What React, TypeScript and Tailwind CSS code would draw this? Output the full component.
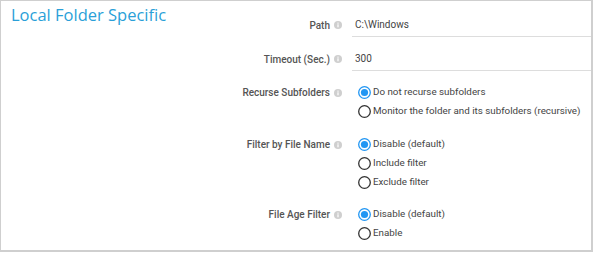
import React from 'react';

const InfoIcon = () => (
  <svg width="8" height="8" viewBox="0 0 8 8" className="ml-[4px] shrink-0">
    <circle cx="4" cy="4" r="4" fill="#cfcfcf" />
    <rect x="3.4" y="3.3" width="1.2" height="3" fill="#fff" />
    <rect x="3.4" y="1.6" width="1.2" height="1.1" fill="#fff" />
  </svg>
);

const Radio = ({ checked, label }: { checked?: boolean; label: string }) => (
  <div className="flex h-[19px] items-center whitespace-nowrap">
    <svg width="13" height="13" viewBox="0 0 13 13" className="shrink-0">
      {checked ? (
        <>
          <circle cx="6.5" cy="6.5" r="5.8" fill="none" stroke="#2196f3" strokeWidth="1.3" />
          <circle cx="6.5" cy="6.5" r="3.6" fill="#2196f3" />
        </>
      ) : (
        <circle cx="6.5" cy="6.5" r="5.8" fill="none" stroke="#333" strokeWidth="1.3" />
      )}
    </svg>
    <span className="ml-[2px] text-[9.8px] text-[#444]">{label}</span>
  </div>
);

const Label = ({ text }: { text: string }) => (
  <div className="flex h-[19px] w-[351px] shrink-0 items-center justify-end pr-[10px] whitespace-nowrap">
    <span className="text-[10px] font-medium text-[#555]">{text}</span>
    <InfoIcon />
  </div>
);

const TextRow = ({ label, value, className }: { label: string; value: string; className?: string }) => (
  <div className={`flex h-[24px] items-center ${className ?? ''}`}>
    <Label text={label} />
    <div className="flex h-[24px] flex-1 items-center border-b border-[#ddd] pl-[3px] text-[10px] text-[#444]">
      {value}
    </div>
  </div>
);

const RadioRow = ({
  label,
  options,
  selected,
  className,
}: {
  label: string;
  options: string[];
  selected: number;
  className?: string;
}) => (
  <div className={`flex items-start ${className ?? ''}`}>
    <Label text={label} />
    <div className="flex flex-col pl-[6px]">
      {options.map((o, i) => (
        <Radio key={o} label={o} checked={i === selected} />
      ))}
    </div>
  </div>
);

export default function App() {
  return (
    <div className="h-[253px] w-[593px] bg-white" style={{ fontFamily: 'Roboto, "Liberation Sans", sans-serif' }}>
      <div className="h-[252px] w-[593px] border-t border-l border-r-2 border-b-2 border-[#cfcfcf]">
        <div
          className="h-[12px] whitespace-nowrap pl-[10px] pt-[4px] text-[16.5px] leading-[20px] text-[#2a9fd8]"
          style={{ fontFamily: '"Open Sans", "Noto Sans", sans-serif' }}
        >
          Local Folder Specific
        </div>
        <TextRow label="Path" value="C:\Windows" />
        <TextRow label="Timeout (Sec.)" value="300" className="mt-[10px]" />
        <RadioRow
          label="Recurse Subfolders"
          options={['Do not recurse subfolders', 'Monitor the folder and its subfolders (recursive)']}
          selected={0}
          className="mt-[12px]"
        />
        <RadioRow
          label="Filter by File Name"
          options={['Disable (default)', 'Include filter', 'Exclude filter']}
          selected={0}
          className="mt-[14px]"
        />
        <RadioRow
          label="File Age Filter"
          options={['Disable (default)', 'Enable']}
          selected={0}
          className="mt-[13px]"
        />
      </div>
    </div>
  );
}
